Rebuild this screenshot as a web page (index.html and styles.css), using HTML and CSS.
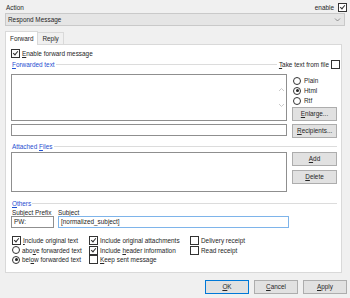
FILE: index.html
```html
<!doctype html>
<html>
<head>
<meta charset="utf-8">
<title>Respond Message</title>
<link rel="stylesheet" href="styles.css">
</head>
<body>
<div class="dlg">

  <div class="head">
    <span class="lbl">Action</span>
    <span class="enable">enable <i class="cb on"></i></span>
  </div>
  <div class="combo">
    <span>Respond Message</span>
    <svg width="7" height="5" viewBox="0 0 7 5"><path d="M1 1.5 L3.5 4 L6 1.5" fill="none" stroke="#7a7a7a" stroke-width="0.8"/></svg>
  </div>

  <div class="tabs">
    <span class="tab sel">Forward</span>
    <span class="tab">Reply</span>
  </div>

  <div class="panel">
    <label class="chk first"><i class="cb on"></i><span><u>E</u>nable forward message</span></label>

    <div class="legend-row fwd">
      <span class="legend"><u>F</u>orwarded text</span>
      <span class="rule"></span>
      <span class="take"><span><u>T</u>ake text from file</span> <i class="cb"></i></span>
    </div>

    <div class="row text-row">
      <div class="box textarea">
        <div class="arrows">
          <svg width="7" height="5" viewBox="0 0 7 5"><path d="M1 4 L3.5 1.5 L6 4" fill="none" stroke="#c4c4c4" stroke-width="0.9"/></svg>
          <svg width="7" height="5" viewBox="0 0 7 5"><path d="M1 1 L3.5 3.5 L6 1" fill="none" stroke="#c4c4c4" stroke-width="0.9"/></svg>
        </div>
      </div>
      <div class="side">
        <div class="radios">
          <label class="rad"><i class="rb"></i>Plain</label>
          <label class="rad"><i class="rb on"></i>Html</label>
          <label class="rad"><i class="rb"></i>Rtf</label>
        </div>
        <span class="btn"><u>E</u>nlarge...</span>
      </div>
    </div>

    <div class="row line-row">
      <div class="box line"></div>
      <span class="btn"><u>R</u>ecipients...</span>
    </div>

    <div class="legend-row attach">
      <span class="legend">Attached <u>F</u>iles</span>
      <span class="rule"></span>
    </div>

    <div class="row list-row">
      <div class="box list"></div>
      <div class="side">
        <span class="btn"><u>A</u>dd</span>
        <span class="btn"><u>D</u>elete</span>
      </div>
    </div>

    <div class="legend-row others">
      <span class="legend"><u>O</u>thers</span>
      <span class="rule"></span>
    </div>

    <div class="subj-labels">
      <span class="prefix-lbl">Subject <u>P</u>refix</span>
      <span><u>S</u>ubject</span>
    </div>
    <div class="subj-row">
      <div class="box prefix">PW:</div>
      <div class="box subject">[normalized_subject]</div>
    </div>

    <div class="opts">
      <div class="col c1">
        <label class="chk"><i class="cb on"></i><span><u>I</u>nclude original text</span></label>
        <label class="chk"><i class="rb"></i><span>abo<u>v</u>e forwarded text</span></label>
        <label class="chk"><i class="rb on"></i><span>bel<u>o</u>w forwarded text</span></label>
      </div>
      <div class="col c2">
        <label class="chk"><i class="cb on"></i><span>Include original attachments</span></label>
        <label class="chk"><i class="cb on"></i><span>Include <u>h</u>eader information</span></label>
        <label class="chk"><i class="cb"></i><span><u>K</u>eep sent message</span></label>
      </div>
      <div class="col c3">
        <label class="chk"><i class="cb"></i><span>Delivery receipt</span></label>
        <label class="chk"><i class="cb"></i><span>Read receipt</span></label>
      </div>
    </div>
  </div>

  <div class="foot">
    <span class="btn big def"><u>O</u>K</span>
    <span class="btn big"><u>C</u>ancel</span>
    <span class="btn big"><u>A</u>pply</span>
  </div>

</div>
</body>
</html>
```

FILE: styles.css
```css
body{ margin:0; background-color:#f0f0f0; font-family:"Liberation Sans", Arial, sans-serif; font-size:6.4px; color:#262626;}
u{ text-decoration:underline; }
label{ display:flex; align-items:center; }

.dlg{ width:340px; height:298px; padding-left:5px; }

.head{ height:13px; display:flex; justify-content:space-between; align-items:center; }
.head .lbl{ padding-left:1px; padding-top:2px; }
.enable{ display:flex; align-items:center; gap:4px; padding-top:2px; margin-right:-2px; }

.combo{
	height:11px;
	border:1px solid #c9c9c9;
	background-color:#e5e5e5;
	display:flex;
	align-items:center;
	justify-content:space-between;
	padding:0 3px 0 2px;
}

.tabs{ display:flex; align-items:flex-end; height:13px; margin-top:5px; }
.tab{
	height:11px;
	line-height:11px;
	padding:0 4px;
	border:1px solid #d9d9d9;
	border-bottom:none;
	background-color:#f0f0f0;
}
.tab.sel{ height:13px; line-height:13px; background-color:#fff; margin-bottom:-1px; position:relative; z-index:1; }
.tab + .tab{ border-left:none; }

.panel{
	width:326px;
	height:222px;
	background-color:#fff;
	border:1px solid #d9d9d9;
	padding:2px 4px 3px 5px;
}

/* check boxes and radios */
.cb{
	display:inline-block;
	width:7px;
	height:7px;
	border:1px solid #333;
	background-color:#fff;
	flex:none;
	position:relative;
}
.cb.on::after{
	content:"";
	position:absolute;
	left:2px;
	top:0;
	width:2px;
	height:4px;
	border:solid #333;
	border-width:0 1px 1px 0;
	transform:rotate(40deg);
}
.rb{
	display:inline-block;
	width:6px;
	height:6px;
	border:1px solid #333;
	border-radius:50%;
	background-color:#fff;
	flex:none;
	position:relative;
}
.rb.on::after{
	content:"";
	position:absolute;
	left:1.5px; top:1.5px;
	width:3px; height:3px;
	border-radius:50%;
	background-color:#222;
}

.chk{ gap:2px; height:10px; }
.chk.first{ margin-top:1px; }

.legend-row{ display:flex; align-items:center; height:9px; }
.legend{ color:#1f4fd1; padding-left:1px; padding-right:1px; }
.rule{ flex:1; height:1px; background-color:#dcdcdc; }
.take{ display:flex; align-items:center; gap:2px; padding-left:2px; margin-right:-3px; }
.fwd{ margin-top:2px; }

.row{ display:flex; gap:5px; }
.box{ border:1px solid #8f8f8f; background-color:#fff; }

.text-row{ margin-top:5px; height:47px; }
.textarea{ width:276px; display:flex; justify-content:flex-end; }
.arrows{ display:flex; flex-direction:column; justify-content:space-between; padding:12px 1px 12px 0; }
.side{ display:flex; flex-direction:column; justify-content:space-between; }
.radios{ display:flex; flex-direction:column; gap:1px; padding-top:2px; padding-left:1px; }
.rad{ gap:3px; height:9px; }

.btn{
	display:block;
	width:43px;
	height:12px;
	line-height:12px;
	text-align:center;
	background-color:#e1e1e1;
	border:1px solid #adadad;
}

.line-row{ margin-top:3px; height:13px; }
.line{ width:276px; height:10px; }

.attach{ margin-top:5px; }
.list-row{ margin-top:1px; height:40px; }
.list{ width:276px; }
.list-row .side{ justify-content:flex-start; gap:4px; }

.others{ margin-top:7px; }
.subj-labels{ display:flex; height:8px; padding-left:1px; align-items:center; }
.prefix-lbl{ width:46px; }
.subj-row{ display:flex; gap:4px; height:12px; }
.box.prefix{ width:39px; padding-left:2px; line-height:10px; }
.box.subject{ width:227px; padding-left:2px; line-height:10px; border-color:#7eb4ea; }

.opts{ display:flex; margin-top:8px; padding-left:1px; }
.opts .col{ display:flex; flex-direction:column; }
.c1{ width:77px; }
.c2{ width:101px; }
.opts .chk{ height:9.6px; }

.foot{ display:flex; justify-content:flex-end; gap:5px; margin-top:7px; margin-right:-2px; }
.btn.big{ width:42px; }
.btn.def{ border-color:#0078d7; }
```
